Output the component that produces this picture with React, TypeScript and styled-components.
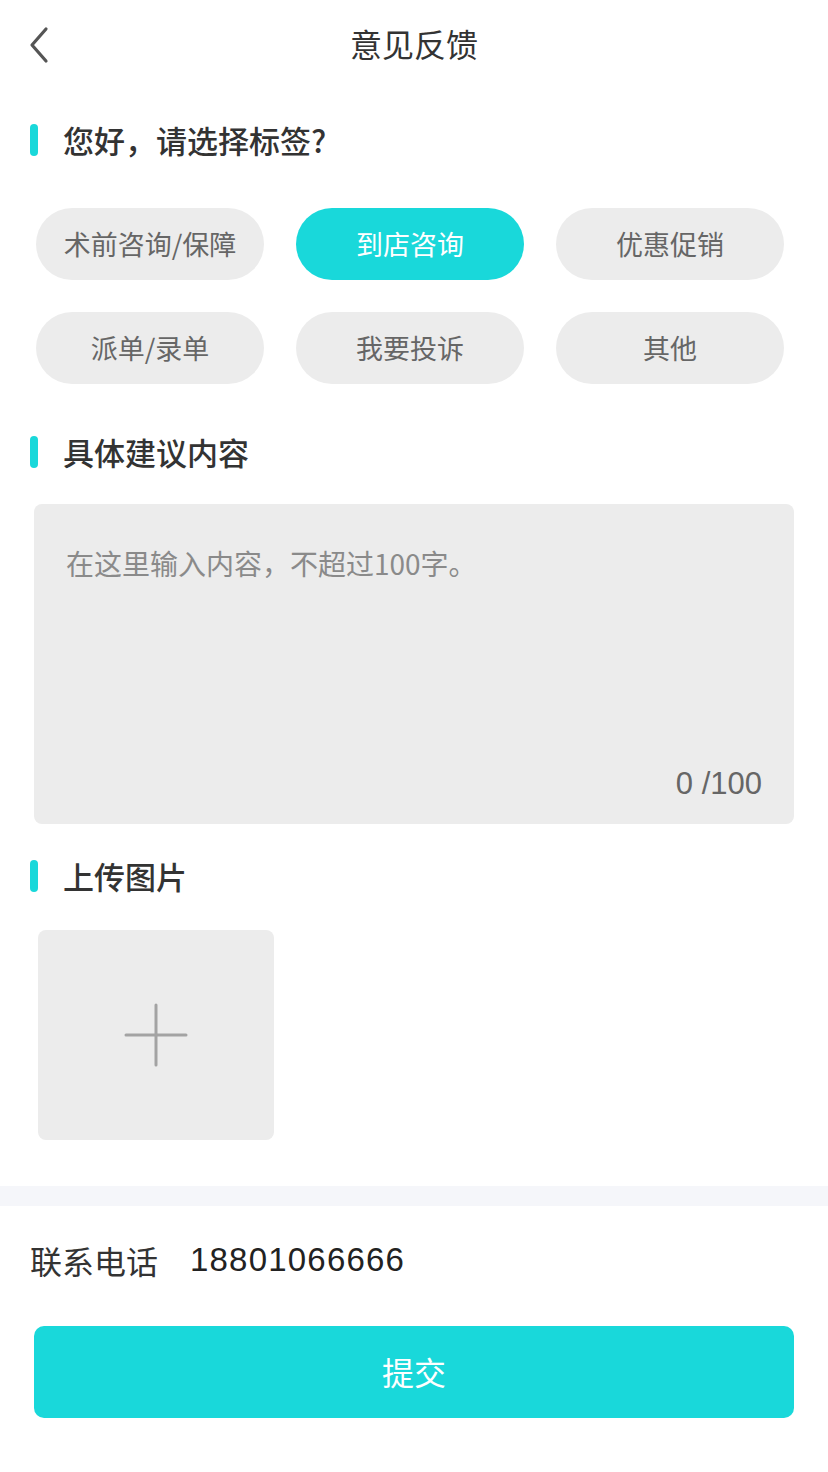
import React, { useState } from "react";
import styled, { createGlobalStyle } from "styled-components";

const GlobalStyle = createGlobalStyle`
  html, body { margin: 0; padding: 0; background: #ffffff; }
  body { font-family: "Liberation Sans", "Noto Sans CJK SC", sans-serif; }
  * { box-sizing: border-box; }
`;

const CYAN = "#19d8da";

const Page = styled.div`
  width: 828px;
  min-height: 1472px;
  background: #fff;
  display: flex;
  flex-direction: column;
`;

const NavBar = styled.div`
  height: 90px;
  padding-bottom: 4px;
  display: flex;
  align-items: center;
  justify-content: center;
  position: relative;
`;

const BackButton = styled.button`
  position: absolute;
  left: 21px;
  top: 25px;
  width: 36px;
  height: 40px;
  border: 0;
  padding: 0;
  background: transparent;
  display: flex;
  align-items: center;
  justify-content: center;
`;

const Title = styled.h1`
  margin: 0;
  font-size: 32px;
  font-weight: 400;
  color: #333;
  font-family: "Noto Sans CJK SC", sans-serif;
`;

const SectionHeading = styled.div<{ $top: number }>`
  margin-top: ${(p) => p.$top}px;
  display: flex;
  align-items: center;
  height: 32px;
  padding-left: 30px;
  gap: 25px;
`;

const Bar = styled.span`
  width: 8px;
  height: 32px;
  border-radius: 4px;
  background: ${CYAN};
`;

const HeadingText = styled.span`
  font-family: "Noto Sans CJK SC", sans-serif;
  font-size: 31px;
  font-weight: 500;
  color: #333;
  line-height: 32px;
`;

const TagGrid = styled.div`
  margin-top: 52px;
  padding-left: 36px;
  display: grid;
  grid-template-columns: repeat(3, 228px);
  grid-auto-rows: 72px;
  column-gap: 32px;
  row-gap: 32px;
`;

const Tag = styled.button<{ $active?: boolean }>`
  border: 0;
  border-radius: 36px;
  background: ${(p) => (p.$active ? CYAN : "#ececec")};
  color: ${(p) => (p.$active ? "#fff" : "#666")};
  font-family: "Noto Sans CJK SC", sans-serif;
  font-size: 27px;
  padding: 0 0 2px;
  display: flex;
  align-items: center;
  justify-content: center;
`;

const TextBox = styled.div`
  margin: 36px 34px 0;
  height: 320px;
  border-radius: 8px;
  background: #ececec;
  display: flex;
  flex-direction: column;
  padding: 42px 32px 22px;
`;

const Input = styled.textarea`
  flex: 1;
  border: 0;
  background: transparent;
  resize: none;
  outline: none;
  padding: 0;
  font-family: "Noto Sans CJK SC", sans-serif;
  font-size: 28px;
  line-height: 34px;
  color: #333;
  &::placeholder {
    color: #8a8a8a;
  }
`;

const Counter = styled.div`
  align-self: flex-end;
  font-family: "Liberation Sans", "Noto Sans CJK SC", sans-serif;
  font-size: 31px;
  line-height: 36px;
  color: #666;
`;

const UploadBox = styled.button`
  margin: 38px 0 0 38px;
  width: 236px;
  height: 210px;
  border: 0;
  border-radius: 8px;
  background: #ececec;
  display: flex;
  align-items: center;
  justify-content: center;
  padding: 0;
`;

const Divider = styled.div`
  margin-top: 46px;
  height: 20px;
  background: #f5f6fa;
`;

const ContactRow = styled.div`
  height: 108px;
  display: flex;
  align-items: center;
  padding-left: 30px;
  gap: 32px;
`;

const ContactLabel = styled.span`
  font-family: "Noto Sans CJK SC", sans-serif;
  font-size: 32px;
  color: #333;
`;

const ContactValue = styled.span`
  font-family: "Liberation Sans", sans-serif;
  font-size: 33px;
  letter-spacing: 1.2px;
  color: #222;
`;

const Submit = styled.button`
  margin: 12px 34px 0;
  height: 92px;
  border: 0;
  border-radius: 10px;
  background: ${CYAN};
  color: #fff;
  font-family: "Noto Sans CJK SC", sans-serif;
  font-size: 32px;
  padding: 0 0 2px;
  display: flex;
  align-items: center;
  justify-content: center;
`;

const tags = ["术前咨询/保障", "到店咨询", "优惠促销", "派单/录单", "我要投诉", "其他"];

export default function App() {
  const [active, setActive] = useState(1);
  const [text, setText] = useState("");
  return (
    <Page>
      <GlobalStyle />
      <NavBar>
        <BackButton aria-label="返回">
          <svg width="24" height="38" viewBox="0 0 24 38">
            <path d="M19 3 L5 19 L19 35" fill="none" stroke="#555" strokeWidth="3.2" strokeLinecap="round" strokeLinejoin="round" />
          </svg>
        </BackButton>
        <Title>意见反馈</Title>
      </NavBar>

      <SectionHeading $top={34}>
        <Bar />
        <HeadingText>您好，请选择标签?</HeadingText>
      </SectionHeading>
      <TagGrid>
        {tags.map((t, i) => (
          <Tag key={t} $active={i === active} onClick={() => setActive(i)}>
            {t}
          </Tag>
        ))}
      </TagGrid>

      <SectionHeading $top={52}>
        <Bar />
        <HeadingText>具体建议内容</HeadingText>
      </SectionHeading>
      <TextBox>
        <Input
          placeholder="在这里输入内容，不超过100字。"
          maxLength={100}
          value={text}
          onChange={(e) => setText(e.target.value)}
        />
        <Counter>{text.length} /100</Counter>
      </TextBox>

      <SectionHeading $top={36}>
        <Bar />
        <HeadingText>上传图片</HeadingText>
      </SectionHeading>
      <UploadBox aria-label="上传图片">
        <svg width="64" height="64" viewBox="0 0 64 64">
          <path d="M32 2 V62 M2 32 H62" stroke="#a3a3a3" strokeWidth="3" strokeLinecap="round" />
        </svg>
      </UploadBox>

      <Divider />
      <ContactRow>
        <ContactLabel>联系电话</ContactLabel>
        <ContactValue>18801066666</ContactValue>
      </ContactRow>
      <Submit>提交</Submit>
    </Page>
  );
}
